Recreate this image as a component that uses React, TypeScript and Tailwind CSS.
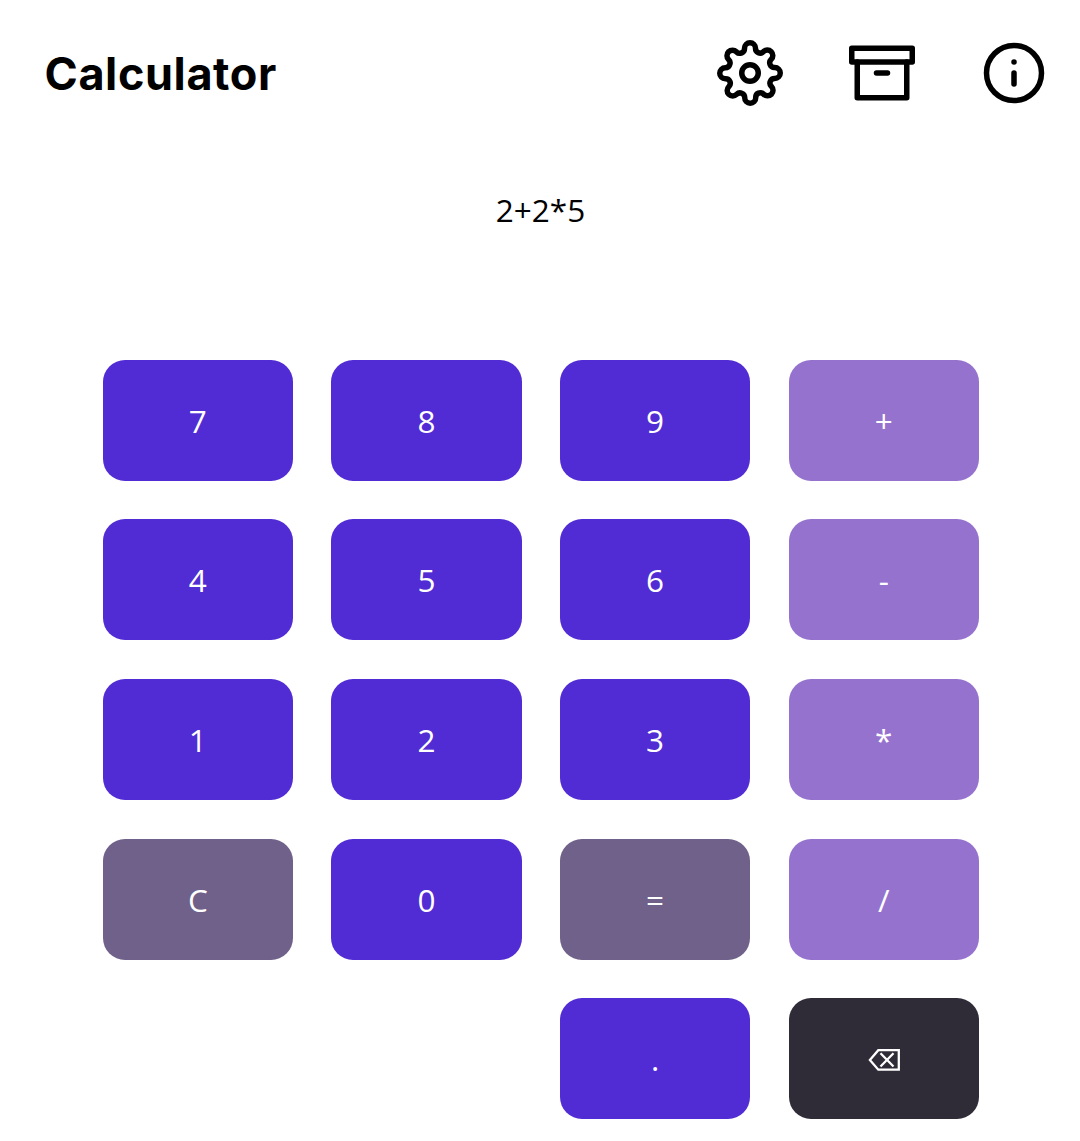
import React from "react";

type Kind = "digit" | "operator" | "action" | "erase";

const colors: Record<Kind, string> = {
  digit: "bg-[#512bd4]",
  operator: "bg-[#9672cf]",
  action: "bg-[#6f6189]",
  erase: "bg-[#2f2b37]",
};

const keys: ([string, Kind] | null)[] = [
  ["7", "digit"], ["8", "digit"], ["9", "digit"], ["+", "operator"],
  ["4", "digit"], ["5", "digit"], ["6", "digit"], ["-", "operator"],
  ["1", "digit"], ["2", "digit"], ["3", "digit"], ["*", "operator"],
  ["C", "action"], ["0", "digit"], ["=", "action"], ["/", "operator"],
  null, null, [".", "digit"], ["erase", "erase"],
];

function Icon({ children }: { children: React.ReactNode }) {
  return (
    <svg className="size-[66px]" viewBox="0 0 24 24" fill="none" stroke="currentColor" strokeWidth="2" strokeLinecap="round" strokeLinejoin="round">
      {children}
    </svg>
  );
}

function EraseIcon() {
  return (
    <svg className="mt-[3px] h-[22px] w-[33px]" viewBox="0 0 33 22" fill="none" stroke="currentColor" strokeWidth="2.3">
      <path d="M11.3 1.2H31.8V20.7H11.3L2.9 11Z" />
      <path d="M13.5 4.3L26.5 17.5M26.5 4.3L13.5 17.5" />
    </svg>
  );
}

export default function App() {
  return (
    <div className="h-[1141px] w-[1080px] overflow-hidden bg-white text-black">
      <header className="flex h-[146px] items-center justify-between pr-[33px] pl-[44.5px]">
        <h1 className="font-['Inter',sans-serif] text-[45px] leading-none font-bold tracking-[0.6px]">Calculator</h1>
        <nav className="flex gap-[66px]">
          <Icon>
            <circle cx="12" cy="12" r="3" />
            <path d="M19.4 15a1.65 1.65 0 0 0 .33 1.82l.06.06a2 2 0 0 1 0 2.83 2 2 0 0 1-2.83 0l-.06-.06a1.65 1.65 0 0 0-1.82-.33 1.65 1.65 0 0 0-1 1.51V21a2 2 0 0 1-2 2 2 2 0 0 1-2-2v-.09A1.65 1.65 0 0 0 9 19.4a1.65 1.65 0 0 0-1.82.33l-.06.06a2 2 0 0 1-2.83 0 2 2 0 0 1 0-2.83l.06-.06a1.65 1.65 0 0 0 .33-1.82 1.65 1.65 0 0 0-1.51-1H3a2 2 0 0 1-2-2 2 2 0 0 1 2-2h.09A1.65 1.65 0 0 0 4.6 9a1.65 1.65 0 0 0-.33-1.82l-.06-.06a2 2 0 0 1 0-2.83 2 2 0 0 1 2.83 0l.06.06a1.65 1.65 0 0 0 1.82.33H9a1.65 1.65 0 0 0 1-1.51V3a2 2 0 0 1 2-2 2 2 0 0 1 2 2v.09a1.65 1.65 0 0 0 1 1.51 1.65 1.65 0 0 0 1.82-.33l.06-.06a2 2 0 0 1 2.83 0 2 2 0 0 1 0 2.83l-.06.06a1.65 1.65 0 0 0-.33 1.82V9a1.65 1.65 0 0 0 1.51 1H21a2 2 0 0 1 2 2 2 2 0 0 1-2 2h-.09a1.65 1.65 0 0 0-1.51 1z" />
          </Icon>
          <Icon>
            <path d="M21 8v13H3V8" />
            <path d="M1 3h22v5H1zM10 12h4" />
          </Icon>
          <Icon>
            <circle cx="12" cy="12" r="10" />
            <path d="M12 16v-4M12 8h.01" />
          </Icon>
        </nav>
      </header>
      <main className="font-['Open_Sans',sans-serif] text-[31.5px] leading-[43px]">
        <div className="flex h-[213.8px] justify-center pt-[42px] pl-px">
          <output>2+2*5</output>
        </div>
        <div className="ml-[102.7px] grid w-[876.2px] auto-rows-[121px] grid-cols-4 gap-x-[38.4px] gap-y-[38.6px]">
          {keys.map((key, i) =>
            key ? (
              <button key={i} aria-label={key[0]} className={`flex items-center justify-center rounded-[22px] text-white ${colors[key[1]]}`}>
                {key[1] === "erase" ? <EraseIcon /> : key[0]}
              </button>
            ) : (
              <span key={i} />
            ),
          )}
        </div>
      </main>
    </div>
  );
}
